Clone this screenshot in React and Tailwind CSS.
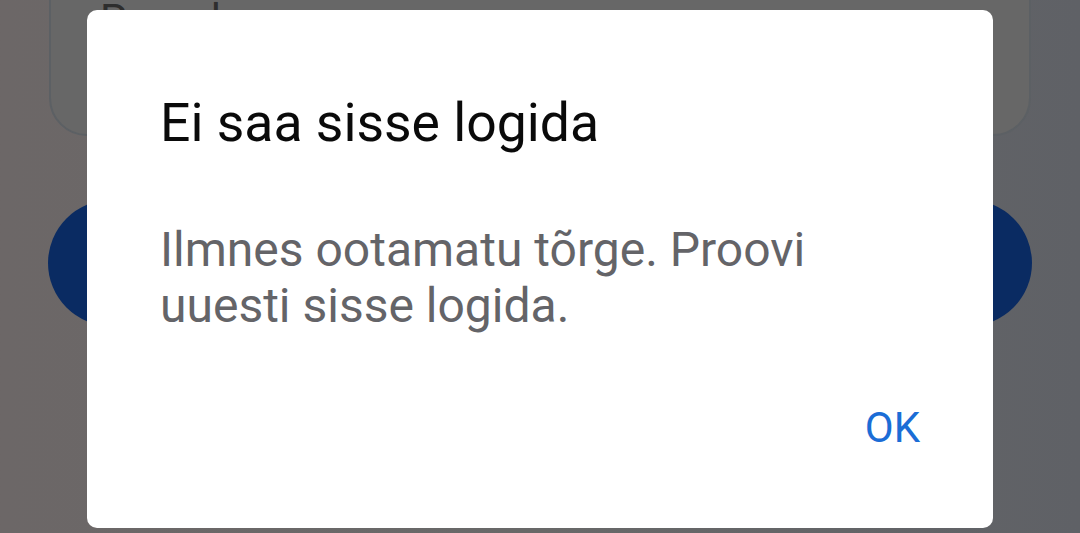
export default function App() {
  return (
    <div
      className="relative w-[1080px] h-[533px] overflow-hidden bg-gradient-to-r from-[#6c6767] via-[#686868] to-[#5f6166]"
      style={{ fontFamily: "Roboto, 'Noto Sans', sans-serif" }}
    >
      <div className="flex flex-col px-[49px]">
        <div className="-mt-[60px] h-[196px] rounded-[38px] border-2 border-[#5c6064] bg-[#676767] px-[49px] pt-[57px]">
          <div className="text-[42px] leading-[42px] text-[#2e2e2e]">Parool</div>
        </div>
        <div className="mt-[64px] h-[126px] -mx-[1px] rounded-full bg-[#0a2b62]" />
      </div>

      <div className="absolute left-[87px] top-[10px] w-[906px] h-[518px] rounded-[10px] bg-white flex flex-col px-[73px]">
        <div className="mt-[78px] text-[53.5px] leading-[70px] text-[#0a0a0a]">Ei saa sisse logida</div>
        <div className="mt-[64px] text-[48px] leading-[56px] text-[#646468]">
          Ilmnes ootamatu tõrge. Proovi
          <br />
          uuesti sisse logida.
        </div>
        <div className="mt-auto mb-[75px] flex justify-end">
          <span className="text-[42px] leading-[50px] text-[#1b6dd6]">OK</span>
        </div>
      </div>
    </div>
  );
}
